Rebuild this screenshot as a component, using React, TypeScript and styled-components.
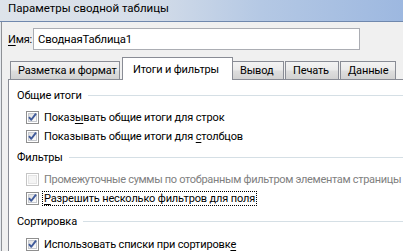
import React from "react";
import styled, { createGlobalStyle } from "styled-components";

const GlobalStyle = createGlobalStyle`
  html, body { margin: 0; padding: 0; background: #f0f0f0; }
  body { font-family: Roboto, "Noto Sans", "Liberation Sans", sans-serif; font-size: 11px; color: #000; }
`;

const Window = styled.div`
  width: 403px;
  height: 251px;
  overflow: hidden;
  background: #f0f0f0;
  display: flex;
  flex-direction: column;
  white-space: nowrap;
`;

const TitleBar = styled.div`
  height: 21px;
  flex: none;
  padding-left: 8px;
  line-height: 16px;
  font-size: 11.5px;
  color: #000;
  border-bottom: 1px solid #7088ad;
  background: linear-gradient(to right, #dde3ea 0%, #d6dee9 35%, #b4c8e4 65%, #9db8e0 100%);
`;

const Frame = styled.div`
  flex: 1;
  display: flex;
  flex-direction: column;
  padding: 6px 0 0 8px;
  box-shadow: inset 1px 0 #e6eaef, inset 2px 0 #8e9196;
  letter-spacing: -0.15px;
`;

const NameRow = styled.div`
  display: flex;
  align-items: center;
  height: 22px;
`;

const NameLabel = styled.label`
  width: 25px;
  flex: none;
`;

const Key = styled.span`
  text-decoration: underline;
  text-underline-offset: 2px;
`;

const NameInput = styled.div`
  width: 327px;
  height: 22px;
  box-sizing: border-box;
  border: 1px solid #abadb3;
  background: #fff;
  padding-left: 4px;
  display: flex;
  align-items: center;
  font-size: 11.3px;
`;

const TabRow = styled.div`
  display: flex;
  align-items: flex-end;
  margin-top: 7px;
  height: 22px;
  padding-left: 2px;
`;

const Tab = styled.div<{ $w: number; $active?: boolean }>`
  width: ${(p) => p.$w}px;
  box-sizing: border-box;
  flex: none;
  border: 1px solid #898c95;
  border-bottom: none;
  display: flex;
  align-items: center;
  padding-left: ${(p) => (p.$active ? 10 : 7)}px;
  height: ${(p) => (p.$active ? 23 : 18)}px;
  margin-left: ${(p) => (p.$active ? 1 : 0)}px;
  margin-right: ${(p) => (p.$active ? -1 : 1)}px;
  margin-bottom: ${(p) => (p.$active ? -1 : 0)}px;
  position: relative;
  z-index: ${(p) => (p.$active ? 1 : 0)};
  background: ${(p) =>
    p.$active ? "#fff" : "linear-gradient(to bottom, #f3f3f3 0%, #ebebeb 45%, #dddddd 55%, #d2d2d2 100%)"};
`;

const Panel = styled.div`
  flex: 1;
  margin-right: -10px;
  background: #fff;
  border-top: 1px solid #898c95;
  border-left: 1px solid #898c95;
  padding: 7px 0 0 8px;
`;

const Section = styled.div<{ $gap: number }>`
  margin-top: ${(p) => p.$gap}px;
`;

const Heading = styled.div<{ $after?: number }>`
  height: 16px;
  display: flex;
  align-items: center;
  gap: 6px;
  margin-bottom: ${(p) => p.$after ?? 5}px;
  &::after {
    content: "";
    flex: 1;
    height: 1px;
    background: #d5dfe5;
  }
`;

const Row = styled.div<{ $disabled?: boolean }>`
  height: 19px;
  display: flex;
  align-items: center;
  padding-left: 9px;
  gap: 3px;
  color: ${(p) => (p.$disabled ? "#808080" : "#000")};
  letter-spacing: ${(p) => (p.$disabled ? "-0.32px" : "-0.15px")};
`;

const Label = styled.span<{ $focus?: boolean }>`
  padding: 0 1px;
  line-height: 13px;
  border: 1px dotted ${(p) => (p.$focus ? "#000" : "transparent")};
`;

const Box = ({ checked, disabled }: { checked?: boolean; disabled?: boolean }) => (
  <svg width="13" height="13" viewBox="0 0 13 13" style={{ flex: "none" }}>
    <defs>
      <linearGradient id="cbg" x1="0" y1="0" x2="1" y2="1">
        <stop offset="0" stopColor="#dcdcdc" />
        <stop offset="1" stopColor="#ffffff" />
      </linearGradient>
    </defs>
    <rect x="0.5" y="0.5" width="12" height="12" fill="#fff" stroke={disabled ? "#c5c5c5" : "#8f8f8f"} />
    <rect x="2.5" y="2.5" width="8" height="8" fill={disabled ? "#f4f4f4" : "url(#cbg)"} stroke={disabled ? "#e4e4e4" : "#c6c9cf"} />
    {checked && <path d="M3 6.2 L5.3 8.8 L10 2.6" fill="none" stroke="#3f5a9a" strokeWidth="1.9" strokeLinejoin="round" />}
  </svg>
);

export default function App() {
  return (
    <Window>
      <GlobalStyle />
      <TitleBar>Параметры сводной таблицы</TitleBar>
      <Frame>
        <NameRow>
          <NameLabel>
            <Key>И</Key>мя:
          </NameLabel>
          <NameInput>СводнаяТаблица1</NameInput>
        </NameRow>
        <TabRow>
          <Tab $w={110}>Разметка и формат</Tab>
          <Tab $w={111} $active>Итоги и фильтры</Tab>
          <Tab $w={52}>Вывод</Tab>
          <Tab $w={54}>Печать</Tab>
          <Tab $w={56}>Данные</Tab>
        </TabRow>
        <Panel>
          <Section $gap={0}>
            <Heading>Общие итоги</Heading>
            <Row>
              <Box checked />
              <Label>
                Показ<Key>ы</Key>вать общие итоги для строк
              </Label>
            </Row>
            <Row>
              <Box checked />
              <Label>
                Показывать общие итоги для <Key>с</Key>толбцов
              </Label>
            </Row>
          </Section>
          <Section $gap={3}>
            <Heading>Фильтры</Heading>
            <Row $disabled>
              <Box disabled />
              <Label>Промежуточные суммы по отобранным фильтром элементам страницы</Label>
            </Row>
            <Row>
              <Box checked />
              <Label $focus>
                <Key>Р</Key>азрешить несколько фильтров для поля
              </Label>
            </Row>
          </Section>
          <Section $gap={5}>
            <Heading $after={6}>Сортировка</Heading>
            <Row>
              <Box checked />
              <Label>
                Использовать списки при сортировк<Key>е</Key>
              </Label>
            </Row>
          </Section>
        </Panel>
      </Frame>
    </Window>
  );
}
